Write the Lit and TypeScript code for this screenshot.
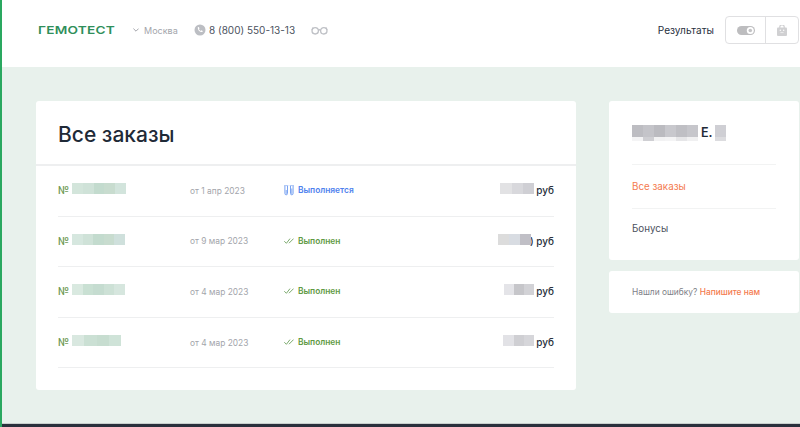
import { LitElement, css, html, svg } from "lit";
import { customElement } from "lit/decorators.js";

type Order = {
  id: string[];
  idWidth: number;
  date: string;
  done: boolean;
  sum: string[];
  sumWidth: number;
  sumTail: string;
};

const ORDERS: Order[] = [
  { id: ["#d3e5db", "#cfe2d8", "#c3dbce", "#c8dccf", "#d2e4dc"], idWidth: 54, date: "от 1 апр 2023", done: false, sum: ["#e2e2e4", "#d8d8dc", "#cfcfd4"], sumWidth: 34, sumTail: "руб" },
  { id: ["#d6e7df", "#cfe2d8", "#c3dbce", "#c8dccf", "#cfe0dc"], idWidth: 53, date: "от 9 мар 2023", done: true, sum: ["#dcdcdc", "#d8dce2", "#c0bfc6"], sumWidth: 33, sumTail: ") руб" },
  { id: ["#d9e9e0", "#c9e0d3", "#c5dcd0", "#cde1d6", "#d6e6de"], idWidth: 53, date: "от 4 мар 2023", done: true, sum: ["#e4e4e8", "#c6c6ca", "#d2d2d6"], sumWidth: 30, sumTail: "руб" },
  { id: ["#d9e8e0", "#cbe0d4", "#c7ddd0", "#cfe3d8"], idWidth: 49, date: "от 4 мар 2023", done: true, sum: ["#e2e2e6", "#cfcfd3", "#d6d6da"], sumWidth: 31, sumTail: "руб" }
];

const NAME_BLUR = ["#bdbdc2", "#c4c4c9", "#bbbbc0", "#c8c8cd", "#bfbfc4", "#c6c6cb"];
const NAME_BLUR_LOW = ["#f4f4f5", "#cfcfd3", "#f2f2f3", "#f4f4f5", "#e6e6e8", "#f0f0f1"];

const phoneIcon = svg`<svg width="12" height="12" viewBox="0 0 12 12"><circle cx="6" cy="6" r="5.5" fill="#bcbec3"/><path d="M3.8 3.2l1 -.3.8 1.6-.7.6c.3.8.9 1.400 1.700 1.800l.7-.7 1.500.9-.4 1c-2.700.2-4.800-2.200-4.600-4.900z" fill="#fff"/></svg>`;
const glassesIcon = svg`<svg width="17" height="9" viewBox="0 0 17 9" fill="none" stroke="#bfc1c6" stroke-width="1.300"><circle cx="4.200" cy="4.800" r="3.200"/><circle cx="12.800" cy="4.800" r="3.200"/><path d="M7.300 4.200c.8-.6 1.600-.6 2.400 0M1 4L2 1.500M16 4l-1-2.500"/></svg>`;
const chevronIcon = svg`<svg width="6" height="4" viewBox="0 0 6 4" fill="none" stroke="#9a9ca3" stroke-width="0.900"><path d="M.4.600L3 3.200 5.600.600"/></svg>`;
const toggleIcon = svg`<svg width="18" height="9" viewBox="0 0 18 9"><rect width="18" height="9" rx="4.500" fill="#bdbdbf"/><circle cx="13.300" cy="4.500" r="3.500" fill="#fff"/><circle cx="13.300" cy="4.500" r="1.800" fill="#c4c4c6"/></svg>`;
const bagIcon = svg`<svg width="10" height="11" viewBox="0 0 10 11"><path d="M2.800 3V2a2.200 2 0 0 1 4.400 0v1" fill="none" stroke="#cfcfd1" stroke-width="1.200"/><rect y="2.500" width="10" height="8.500" rx="1" fill="#d0d0d2"/><circle cx="3.300" cy="5.300" r=".7" fill="#fff"/><circle cx="6.700" cy="5.300" r=".7" fill="#fff"/><path d="M3.400 7.600h3.200" stroke="#fff" stroke-width=".6"/></svg>`;
const tubesIcon = svg`<svg width="10" height="11" viewBox="0 0 10 11" fill="none" stroke="#7aa3f2" stroke-width="1"><path d="M0 .6h4.300M5.700 .6H10" stroke="#a9c4f6"/><path d="M.9 1v7.500a1.300 1.300 0 0 0 2.600 0V1M6.500 1v7.500a1.300 1.300 0 0 0 2.600 0V1"/><path d="M1.400 5h1.600v4h-1.600zM7 3.500h1.600v5.500H7z" fill="#a9c4f6" stroke="none"/></svg>`;
const checksIcon = svg`<svg width="10" height="6" viewBox="0 0 10 6" fill="none" stroke="#6c9f5c" stroke-width="0.900"><path d="M.3 3.200L2.400 5.300 6 .6M5 5.200L9.600.6"/></svg>`;

@customElement("app-root")
export class AppRoot extends LitElement {
  static styles = css`
    :host {
      display: block;
      height: 427px;
      overflow: hidden;
      font-family: Inter, "Liberation Sans", sans-serif;
      color: #1f2a37;
      background: #e8f1ec;
    }

    .page {
      display: flex;
      flex-direction: column;
      height: 427px;
      border-left: 2px solid #2aa860;
      box-sizing: border-box;
    }

    .top {
      display: flex;
      align-items: center;
      height: 67px;
      flex: none;
      padding: 0 1px 7px 36px;
      box-sizing: border-box;
      background: #fff;
    }

    .logo {
      width: 76px;
      margin-right: 19px;
      font-size: 11px;
      font-weight: 600;
      letter-spacing: 0.2px;
      color: #2f8f5b;
      white-space: nowrap;
      transform: scaleX(1.24);
      transform-origin: left center;
    }

    .city {
      display: flex;
      align-items: center;
      gap: 5px;
      width: 61px;
      font-size: 9px;
      color: #a3a5ab;
    }

    .phone {
      display: flex;
      align-items: center;
      gap: 3px;
      width: 117px;
      font-size: 10px;
      color: #4b5260;
    }

    .glasses {
      display: flex;
    }

    .results {
      margin-left: auto;
      margin-right: 11px;
      font-size: 10.100px;
      color: #27303d;
    }

    .tools {
      display: flex;
      width: 74px;
      height: 28px;
      border: 1px solid #e0e0e2;
      border-radius: 4px;
      box-sizing: border-box;
    }

    .tools span {
      display: flex;
      align-items: center;
      justify-content: center;
    }

    .tools span:first-child {
      width: 39px;
      border-right: 1px solid #e0e0e2;
    }

    .tools span:last-child {
      flex: 1;
    }

    .main {
      display: flex;
      align-items: flex-start;
      flex: 1;
      gap: 33px;
      padding: 34px 1px 0 34px;
    }

    .orders {
      width: 540px;
      height: 289px;
      flex: none;
      background: #fff;
      border-radius: 3px;
    }

    h1 {
      height: 63px;
      margin: 0;
      padding: 0 22px;
      border-bottom: 2px solid #eeeff0;
      font-size: 21px;
      font-weight: 500;
      line-height: 68px;
      color: #1f2a37;
    }

    .list {
      padding: 0 22px;
    }

    .row {
      display: grid;
      grid-template-columns: 132px 94px 1fr auto;
      align-items: center;
      height: 50.600px;
      padding-bottom: 1px;
      border-bottom: 1px solid #eeeff0;
      box-sizing: border-box;
      font-size: 8.400px;
    }

    .num {
      display: flex;
      align-items: center;
      gap: 3px;
      font-size: 10px;
      font-weight: 600;
      color: #6f9a55;
    }

    .blur {
      display: flex;
      height: 11px;
    }

    .blur i {
      flex: 1;
    }

    .num .blur,
    .sum .blur {
      margin-bottom: 3px;
    }

    .date {
      padding-top: 1px;
      color: #a3a5ab;
    }

    .status {
      display: flex;
      align-items: center;
      gap: 4px;
      font-weight: 600;
      color: #5f9a45;
    }

    .status svg {
      width: 10px;
    }

    .status.active {
      color: #4f82ee;
    }

    .sum {
      display: flex;
      align-items: center;
      gap: 2px;
      font-size: 10px;
      font-weight: 500;
      color: #27303d;
    }

    .sum.over .blur {
      position: relative;
      margin-right: -3px;
    }

    .side {
      display: flex;
      flex-direction: column;
      flex: 1;
      gap: 11px;
    }

    .card {
      background: #fff;
      border-radius: 3px;
    }

    .menu {
      height: 159px;
      padding: 0 23px;
      box-sizing: border-box;
    }

    .who {
      display: flex;
      align-items: center;
      height: 64px;
      border-bottom: 1px solid #f2f3f3;
      box-sizing: border-box;
      font-size: 12.500px;
      font-weight: 600;
      color: #1f2a37;
    }

    .who b {
      margin: 0 2px 0 3px;
      font-weight: 600;
    }

    .stack {
      display: flex;
      flex-direction: column;
    }

    .stack .blur {
      height: 12px;
    }

    .stack .blur + .blur {
      height: 4px;
    }

    .menu a {
      display: block;
      height: 43px;
      line-height: 40px;
      font-size: 9.800px;
      color: #4b5260;
    }

    .menu a.on {
      border-bottom: 1px solid #f2f3f3;
      line-height: 44px;
      color: #f47a4e;
    }

    .note {
      height: 42px;
      padding: 0 23px;
      box-sizing: border-box;
      font-size: 8.400px;
      line-height: 42px;
      white-space: nowrap;
      color: #7d8087;
    }

    .note a {
      font-weight: 500;
      color: #f47a4e;
    }

    .bottom {
      height: 4px;
      flex: none;
      border-top: 1px solid #c9cfcd;
      box-sizing: border-box;
      background: #2a303c;
    }
  `;

  blur(colors: string[], width: number) {
    return html`<div class="blur" style="width:${width}px">
      ${colors.map((c) => html`<i style="background:${c}"></i>`)}
    </div>`;
  }

  renderOrder(o: Order) {
    return html`
      <div class="row">
        <div class="num">№ ${this.blur(o.id, o.idWidth)}</div>
        <div class="date">${o.date}</div>
        ${o.done
          ? html`<div class="status">${checksIcon}<span>Выполнен</span></div>`
          : html`<div class="status active">${tubesIcon}<span>Выполняется</span></div>`}
        <div class="sum ${o.sumTail === "руб" ? "" : "over"}">
          ${this.blur(o.sum, o.sumWidth)}<span>${o.sumTail}</span>
        </div>
      </div>
    `;
  }

  render() {
    return html`
      <div class="page">
        <header class="top">
          <div class="logo">ГЕМОТЕСТ</div>
          <div class="city">${chevronIcon}<span>Москва</span></div>
          <div class="phone">${phoneIcon}<span>8 (800) 550-13-13</span></div>
          <div class="glasses">${glassesIcon}</div>
          <div class="results">Результаты</div>
          <div class="tools"><span>${toggleIcon}</span><span>${bagIcon}</span></div>
        </header>
        <main class="main">
          <section class="orders">
            <h1>Все заказы</h1>
            <div class="list">${ORDERS.map((o) => this.renderOrder(o))}</div>
          </section>
          <aside class="side">
            <div class="card menu">
              <div class="who">
                <div class="stack">${this.blur(NAME_BLUR, 66)}${this.blur(NAME_BLUR_LOW, 66)}</div>
                <b>Е.</b>
                <div class="stack">${this.blur(["#cfcfd4"], 11)}${this.blur(["#dcdcdf"], 11)}</div>
              </div>
              <a class="on">Все заказы</a>
              <a>Бонусы</a>
            </div>
            <div class="card note">Нашли ошибку? <a>Напишите нам</a></div>
          </aside>
        </main>
        <div class="bottom"></div>
      </div>
    `;
  }
}
